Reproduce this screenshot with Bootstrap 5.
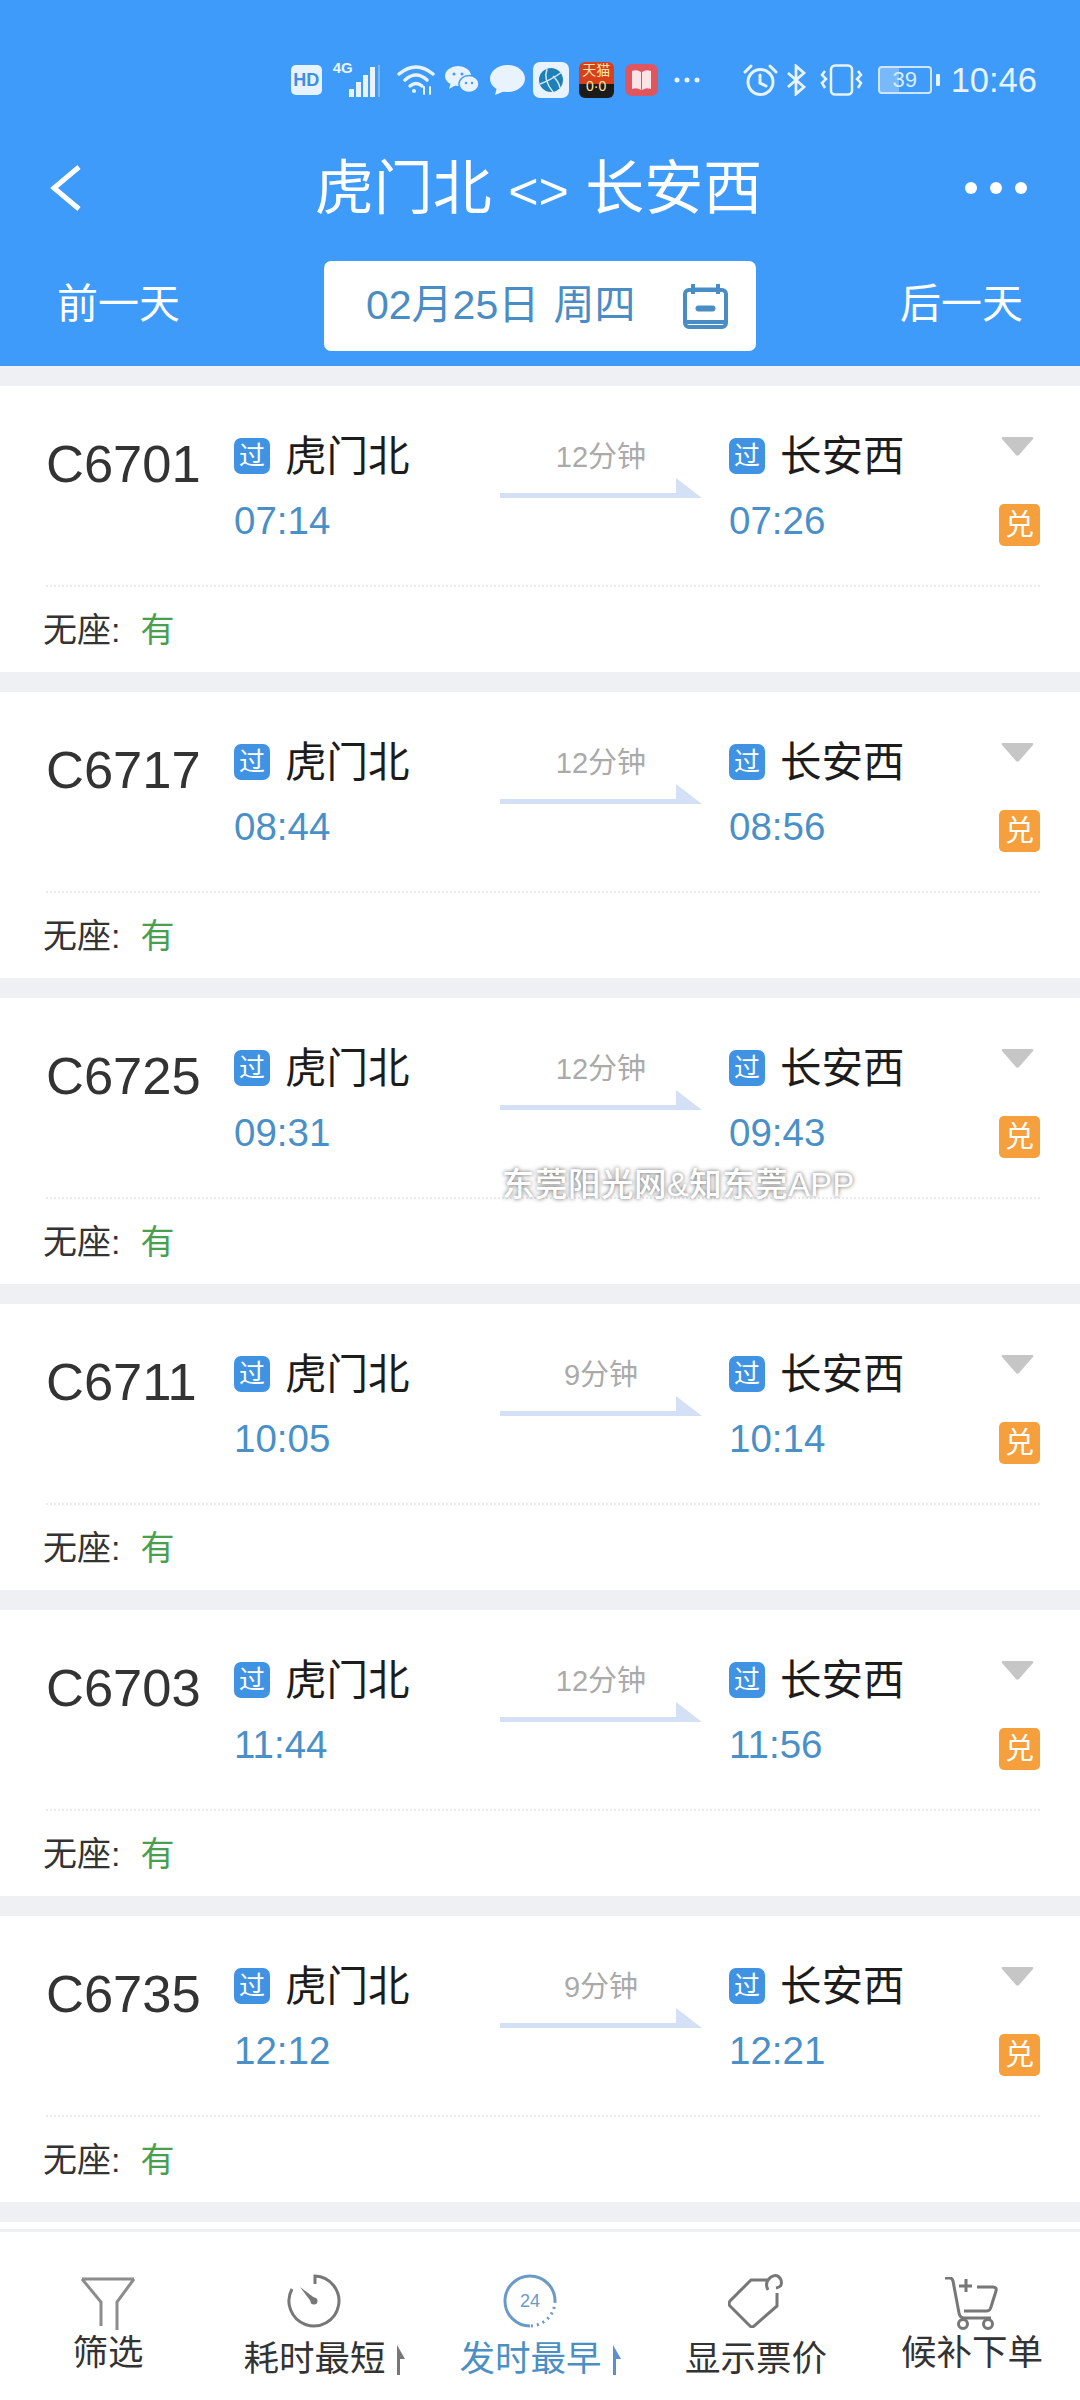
<!DOCTYPE html>
<html lang="zh">
  <head>
    <meta charset="utf-8">
    <title>虎门北 - 长安西</title>
    <link href="https://cdn.jsdelivr.net/npm/bootstrap@5.3.0/dist/css/bootstrap.min.css" rel="stylesheet">
    <style>
      html, body { height: 2400px; }
      body { width: 1080px; background: #eef0f4; font-family: "Liberation Sans", "Noto Sans CJK SC", sans-serif; color: #333; }
      .page-wrap { height: 2400px; }

      /* header */
      .top-head { background: #3e9bf9; color: #fff; height: 366px; flex: none; }
      .status-row { height: 80px; margin-top: 40px; padding-right: 43px; color: #e8f3fe; }
      .status-row svg { flex: none; }
      .hd-tag { width: 31px; height: 30px; margin-left: 0; background: #e6f2fd; color: #3e8fe0; border-radius: 5px; font-size: 18px; font-weight: 700; line-height: 30px; text-align: center; }
      .net-wrap { width: 48px; height: 34px; margin-left: 11px; }
      .net-label { left: 0; top: -2px; font-size: 15px; font-weight: 700; line-height: 14px; }
      .net-wrap svg { right: 0; bottom: 0; }
      .m-8 { margin-left: 8px; } .m-10 { margin-left: 10px; } .m-11 { margin-left: 11px; }
      .m-13 { margin-left: 13px; } .m-15 { margin-left: 15px; } .m-16 { margin-left: 16px; } .m-43 { margin-left: 43px; }
      .tmall-tile { width: 35px; height: 36px; margin-left: 10px; background: linear-gradient(#d8401c 62%, #1d1a1a 62%); border-radius: 6px; color: #ffe9a8; font-size: 14px; line-height: 16px; text-align: center; overflow: hidden; }
      .batt-box { width: 54px; height: 28px; margin-left: 15px; border: 2px solid #cfe5fc; border-radius: 4px; font-size: 22px; line-height: 24px; color: #dcecfd; background: linear-gradient(90deg, rgba(255,255,255,.3) 39%, transparent 39%); text-align: center; }
      .batt-nub { width: 4px; height: 12px; margin-left: 4px; background: #e8f3fe; border-radius: 1px; }
      .clock-txt { margin-left: 11px; font-size: 34.5px; line-height: 40px; }

      .title-row { display: grid; grid-template-columns: 1fr auto 1fr; height: 136px; margin-bottom: 5px; padding: 0 53px 0 50px; }
      .route-title { padding-top: 4px; font-size: 59px; font-weight: 400; line-height: 70px; }
      .route-sep { font-size: 52px; }
      .more-dots { gap: 13px; }
      .more-dots span { width: 12px; height: 12px; background: #fff; border-radius: 50%; }

      .date-row { display: grid; grid-template-columns: 324px 432px 324px; height: 90px; }
      .day-link { font-size: 41px; line-height: 86px; }
      .day-prev { padding-left: 57px; }
      .day-next { padding-right: 57px; text-align: right; }
      .date-box { padding: 0 28px 0 42px; background: #fff; color: #4a8cc4; border-radius: 7px; font-size: 41px; }
      .date-box span { word-spacing: 3px; }

      /* train list */
      .train-list { padding-top: 20px; }
      .train-card { height: 286px; margin-bottom: 20px; background: #fff; }
      .train-main { height: 201px; margin: 0 40px 0 46px; padding-top: 48px; border-bottom: 2px dotted #e9eaec; }
      .train-no { width: 188px; flex: none; font-size: 52.5px; line-height: 60px; color: #333; }
      .stop-col { width: 266px; flex: none; }
      .stop-col.to-col { width: 270px; }
      .stop-line { height: 44px; }
      .via-tag { width: 36px; height: 36px; margin-right: 15px; background: #3f93e2; color: #fff; border-radius: 7px; font-size: 26px; line-height: 36px; text-align: center; }
      .stop-name { padding-top: 2px; font-size: 41.5px; line-height: 44px; color: #1c1c1c; }
      .dep-time { margin-top: 21px; font-size: 38.5px; line-height: 44px; color: #4a90c8; }
      .dur-col { width: 202px; margin-right: 27px; flex: none; }
      .dur-txt { font-size: 29px; line-height: 46px; color: #aaa; margin-bottom: -2px; }
      .side-col { width: 41px; flex: none; }
      .down-tri { margin: 3px 0 48px 2px; }
      .dui-tag { width: 41px; height: 42px; background: #f5a03c; color: #fff; border-radius: 5px; font-size: 29px; line-height: 42px; text-align: center; }
      .seat-row { margin: 23px 0 0 43px; font-size: 34px; line-height: 40px; color: #333; }
      .seat-ok { margin-left: 20px; color: #4a9e4f; }
      .peek-card { height: 40px; background: #fff; }

      .water-mark { left: 502px; top: 1163px; font-size: 32.5px; font-weight: 500; line-height: 44px; color: #fff; text-shadow: 0 0 4px rgba(70, 70, 70, .85); white-space: nowrap; letter-spacing: .5px; }

      /* bottom tabs */
      .bottom-tabs { height: 171px; flex: none; background: #fff; border-top: 3px solid #eeeff1; }
      .tab-item { width: 216px; padding-top: 42px; }
      .tab-item.tab-high { padding-top: 45px; }
      .tab-label { font-size: 35.5px; line-height: 40px; color: #333; white-space: nowrap; }
      .tab-high .tab-label { margin-top: 3px; }
      .tab-low .tab-label { margin-top: 11px; }
      .tab-on .tab-label { color: #4a90c4; }
      .sort-mark { margin: 0 0 4px 11px; }
    </style>
  </head>
  <body>
    <svg width="0" height="0" class="position-absolute">
      <symbol id="trip-arrow" viewBox="0 0 202 20"><polygon points="0,15 176,15 176,0 202,20 0,20" fill="#d3e0f6"/></symbol>
      <symbol id="down-arrow" viewBox="0 0 33 19"><path d="M2 0H31Q33 0 32 2L18 18Q16.500 19.500 15 18L1 2Q0 0 2 0Z" fill="#c6c6c6"/></symbol>
      <symbol id="sort-up" viewBox="0 0 8 30"><path d="M0 0L8 14H3V30H0Z"/></symbol>
    </svg>

    <div class="page-wrap d-flex flex-column position-relative overflow-hidden">
      <header class="top-head">
        <div class="status-row d-flex align-items-center justify-content-end">
          <div class="hd-tag">HD</div>
          <div class="net-wrap position-relative">
            <span class="net-label position-absolute">4G</span>
            <svg width="32" height="32" viewBox="0 0 32 32" fill="currentColor" class="position-absolute"><rect x="0" y="24" width="5" height="8"/><rect x="7" y="17" width="5" height="15"/><rect x="14" y="10" width="5" height="22"/><rect x="21" y="2" width="5" height="30"/><rect x="29" y="0" width="2" height="32" opacity=".35"/></svg>
          </div>
          <svg class="m-16" width="38" height="32" viewBox="0 0 38 32" fill="none" stroke="currentColor" stroke-width="3.500" stroke-linecap="round"><path d="M2 10Q19 -4 36 10"/><path d="M8 16Q19 6 30 16"/><path d="M13 22Q19 17 25 22"/><circle cx="17" cy="27" r="2" fill="currentColor" stroke="none"/><path d="M27 30V23M33 30V23" stroke-width="2"/></svg>
          <svg class="m-10" width="34" height="28" viewBox="0 0 34 28" fill="currentColor"><ellipse cx="13" cy="10" rx="13" ry="10"/><path d="M6 16L4 23L11 19Z"/><ellipse cx="24" cy="18" rx="10" ry="8.500" stroke="#3e9bf9" stroke-width="1.500"/><circle cx="9" cy="8" r="1.500" fill="#3e9bf9"/><circle cx="17" cy="8" r="1.500" fill="#3e9bf9"/><circle cx="21" cy="17" r="1.200" fill="#3e9bf9"/><circle cx="27" cy="17" r="1.200" fill="#3e9bf9"/></svg>
          <svg class="m-11" width="35" height="30" viewBox="0 0 35 30" fill="currentColor"><ellipse cx="17.500" cy="13.500" rx="17.500" ry="13.500"/><path d="M7 22L5 30L15 26Z"/></svg>
          <svg class="m-8" width="36" height="36" viewBox="0 0 36 36"><rect width="36" height="36" rx="7" fill="#e8f3fe"/><circle cx="18" cy="18" r="12" fill="#1f7fb8"/><path d="M7 22Q18 18 29 10M14 7Q10 18 20 30M20 14Q26 20 27 26" fill="none" stroke="#cfe9f5" stroke-width="1.500"/></svg>
          <div class="tmall-tile">天猫<br>0·0</div>
          <svg class="m-11" width="33" height="32" viewBox="0 0 33 32"><rect width="33" height="32" rx="7" fill="#e0565f"/><path d="M7 7Q12 5 16 8V26Q12 23 7 25ZM26 7Q21 5 17 8V26Q21 23 26 25Z" fill="#fbe3e6"/></svg>
          <svg class="m-16" width="26" height="6" viewBox="0 0 26 6" fill="currentColor"><circle cx="3" cy="3" r="2.500"/><circle cx="13" cy="3" r="2.500"/><circle cx="23" cy="3" r="2.500"/></svg>
          <svg class="m-43" width="35" height="32" viewBox="0 0 35 32" fill="none" stroke="currentColor" stroke-width="3" stroke-linecap="round"><circle cx="17.500" cy="18" r="12.500"/><path d="M17 11V19L23 22M2 8L8 2M33 8L27 2"/></svg>
          <svg class="m-8" width="21" height="32" viewBox="0 0 21 32" fill="none" stroke="currentColor" stroke-width="2.800"><path d="M2 9L18 23L10 30V2L18 9L2 23"/></svg>
          <svg class="m-13" width="43" height="32" viewBox="0 0 43 32" fill="none" stroke="currentColor" stroke-width="2.500"><rect x="11" y="1.500" width="21" height="29" rx="4"/><path d="M5 7L2 11L6 15L2 19L5 24M38 7L41 11L37 15L41 19L38 24"/></svg>
          <div class="batt-box">39</div>
          <div class="batt-nub"></div>
          <div class="clock-txt">10:46</div>
        </div>

        <div class="title-row align-items-center">
          <svg width="31" height="46" viewBox="0 0 31 46" fill="none" stroke="#fff" stroke-width="5"><path d="M29 2L4 23L29 44"/></svg>
          <div class="route-title">虎门北 <span class="route-sep">&lt;&gt;</span> 长安西</div>
          <div class="more-dots d-flex justify-content-end"><span></span><span></span><span></span></div>
        </div>

        <div class="date-row">
          <div class="day-link day-prev">前一天</div>
          <div class="date-box d-flex align-items-center justify-content-between">
            <span>02月25日 周四</span>
            <svg width="45" height="45" viewBox="0 0 45 45" fill="none" stroke="#4a8cc4" stroke-width="4"><rect x="2" y="6" width="41" height="37" rx="4"/><path d="M10 0V10M35 0V10M2 38H43" /><path d="M10 5H35" stroke-width="3"/><rect x="13" y="22" width="19" height="5" rx="2" fill="#4a8cc4" stroke-width="1"/></svg>
          </div>
          <div class="day-link day-next">后一天</div>
        </div>
      </header>

      <main class="train-list flex-grow-1 overflow-hidden">
        <div class="train-card">
          <div class="train-main d-flex">
            <div class="train-no">C6701</div>
            <div class="stop-col"><div class="stop-line d-flex align-items-center"><span class="via-tag">过</span><span class="stop-name">虎门北</span></div><div class="dep-time">07:14</div></div>
            <div class="dur-col text-center"><div class="dur-txt">12分钟</div><svg class="d-block" width="202" height="20"><use href="#trip-arrow"/></svg></div>
            <div class="stop-col to-col"><div class="stop-line d-flex align-items-center"><span class="via-tag">过</span><span class="stop-name">长安西</span></div><div class="dep-time">07:26</div></div>
            <div class="side-col"><svg class="down-tri d-block" width="33" height="19"><use href="#down-arrow"/></svg><div class="dui-tag">兑</div></div>
          </div>
          <div class="seat-row">无座:<span class="seat-ok">有</span></div>
        </div>

        <div class="train-card">
          <div class="train-main d-flex">
            <div class="train-no">C6717</div>
            <div class="stop-col"><div class="stop-line d-flex align-items-center"><span class="via-tag">过</span><span class="stop-name">虎门北</span></div><div class="dep-time">08:44</div></div>
            <div class="dur-col text-center"><div class="dur-txt">12分钟</div><svg class="d-block" width="202" height="20"><use href="#trip-arrow"/></svg></div>
            <div class="stop-col to-col"><div class="stop-line d-flex align-items-center"><span class="via-tag">过</span><span class="stop-name">长安西</span></div><div class="dep-time">08:56</div></div>
            <div class="side-col"><svg class="down-tri d-block" width="33" height="19"><use href="#down-arrow"/></svg><div class="dui-tag">兑</div></div>
          </div>
          <div class="seat-row">无座:<span class="seat-ok">有</span></div>
        </div>

        <div class="train-card">
          <div class="train-main d-flex">
            <div class="train-no">C6725</div>
            <div class="stop-col"><div class="stop-line d-flex align-items-center"><span class="via-tag">过</span><span class="stop-name">虎门北</span></div><div class="dep-time">09:31</div></div>
            <div class="dur-col text-center"><div class="dur-txt">12分钟</div><svg class="d-block" width="202" height="20"><use href="#trip-arrow"/></svg></div>
            <div class="stop-col to-col"><div class="stop-line d-flex align-items-center"><span class="via-tag">过</span><span class="stop-name">长安西</span></div><div class="dep-time">09:43</div></div>
            <div class="side-col"><svg class="down-tri d-block" width="33" height="19"><use href="#down-arrow"/></svg><div class="dui-tag">兑</div></div>
          </div>
          <div class="seat-row">无座:<span class="seat-ok">有</span></div>
        </div>

        <div class="train-card">
          <div class="train-main d-flex">
            <div class="train-no">C6711</div>
            <div class="stop-col"><div class="stop-line d-flex align-items-center"><span class="via-tag">过</span><span class="stop-name">虎门北</span></div><div class="dep-time">10:05</div></div>
            <div class="dur-col text-center"><div class="dur-txt">9分钟</div><svg class="d-block" width="202" height="20"><use href="#trip-arrow"/></svg></div>
            <div class="stop-col to-col"><div class="stop-line d-flex align-items-center"><span class="via-tag">过</span><span class="stop-name">长安西</span></div><div class="dep-time">10:14</div></div>
            <div class="side-col"><svg class="down-tri d-block" width="33" height="19"><use href="#down-arrow"/></svg><div class="dui-tag">兑</div></div>
          </div>
          <div class="seat-row">无座:<span class="seat-ok">有</span></div>
        </div>

        <div class="train-card">
          <div class="train-main d-flex">
            <div class="train-no">C6703</div>
            <div class="stop-col"><div class="stop-line d-flex align-items-center"><span class="via-tag">过</span><span class="stop-name">虎门北</span></div><div class="dep-time">11:44</div></div>
            <div class="dur-col text-center"><div class="dur-txt">12分钟</div><svg class="d-block" width="202" height="20"><use href="#trip-arrow"/></svg></div>
            <div class="stop-col to-col"><div class="stop-line d-flex align-items-center"><span class="via-tag">过</span><span class="stop-name">长安西</span></div><div class="dep-time">11:56</div></div>
            <div class="side-col"><svg class="down-tri d-block" width="33" height="19"><use href="#down-arrow"/></svg><div class="dui-tag">兑</div></div>
          </div>
          <div class="seat-row">无座:<span class="seat-ok">有</span></div>
        </div>

        <div class="train-card">
          <div class="train-main d-flex">
            <div class="train-no">C6735</div>
            <div class="stop-col"><div class="stop-line d-flex align-items-center"><span class="via-tag">过</span><span class="stop-name">虎门北</span></div><div class="dep-time">12:12</div></div>
            <div class="dur-col text-center"><div class="dur-txt">9分钟</div><svg class="d-block" width="202" height="20"><use href="#trip-arrow"/></svg></div>
            <div class="stop-col to-col"><div class="stop-line d-flex align-items-center"><span class="via-tag">过</span><span class="stop-name">长安西</span></div><div class="dep-time">12:21</div></div>
            <div class="side-col"><svg class="down-tri d-block" width="33" height="19"><use href="#down-arrow"/></svg><div class="dui-tag">兑</div></div>
          </div>
          <div class="seat-row">无座:<span class="seat-ok">有</span></div>
        </div>
        <div class="peek-card"></div>
      </main>

      <div class="water-mark position-absolute">东莞阳光网&amp;知东莞APP</div>

      <nav class="bottom-tabs d-flex">
        <div class="tab-item tab-high d-flex justify-content-center">
          <div class="d-flex flex-column align-items-center">
            <svg width="54" height="53" viewBox="0 0 54 53" fill="none" stroke="#8c8c8c" stroke-width="3"><path d="M1 2H53M1 2L20 25V49M53 2L36 25V53"/></svg>
            <div class="tab-label">筛选</div>
          </div>
        </div>
        <div class="tab-item tab-low d-flex justify-content-center align-items-start">
          <div class="d-flex align-items-end">
            <div class="d-flex flex-column align-items-center">
              <svg width="54" height="54" viewBox="0 0 54 54" fill="none" stroke="#777" stroke-width="3"><path d="M28 10V2A25 25 0 1 1 5 15"/><path d="M13 13L29 25L25 29Z" fill="#777" stroke="none"/><circle cx="27" cy="27" r="3.500" fill="#777" stroke="none"/></svg>
              <div class="tab-label">耗时最短</div>
            </div>
            <svg class="sort-mark" width="8" height="30" fill="#777"><use href="#sort-up"/></svg>
          </div>
        </div>
        <div class="tab-item tab-low tab-on d-flex justify-content-center align-items-start">
          <div class="d-flex align-items-end">
            <div class="d-flex flex-column align-items-center">
              <svg width="54" height="54" viewBox="0 0 54 54" fill="none" stroke="#6a9ac8" stroke-width="3"><path d="M27 52A25 25 0 1 1 52 27"/><path d="M52 27A25 25 0 0 1 27 52" stroke-dasharray="2 4"/><text x="27" y="33" text-anchor="middle" font-size="18" fill="#6a9ac8" stroke="none">24</text></svg>
              <div class="tab-label">发时最早</div>
            </div>
            <svg class="sort-mark" width="8" height="30" fill="#5a8fd0"><use href="#sort-up"/></svg>
          </div>
        </div>
        <div class="tab-item tab-low d-flex justify-content-center">
          <div class="d-flex flex-column align-items-center">
            <svg width="56" height="54" viewBox="0 0 56 54" fill="none" stroke="#777" stroke-width="3"><path d="M39 6H23L2 27Q0 30 2 32L22 52Q24 54 26 52L49 32V19"/><path d="M40 16Q36 8 43 3Q50 -1 53 6Q55 13 48 14"/></svg>
            <div class="tab-label">显示票价</div>
          </div>
        </div>
        <div class="tab-item tab-high d-flex justify-content-center">
          <div class="d-flex flex-column align-items-center">
            <svg width="54" height="53" viewBox="0 0 54 53" fill="none" stroke="#777" stroke-width="3"><path d="M0 1H5Q7 1 8 4L14 36Q15 41 19 41H46"/><path d="M32 10H48Q52 10 51 14L46 30Q45 34 42 34H19"/><path d="M21 2V15M14 9H27"/><circle cx="18" cy="47" r="4.500"/><circle cx="43" cy="47" r="4.500"/></svg>
            <div class="tab-label">候补下单</div>
          </div>
        </div>
      </nav>
    </div>

    <script src="https://cdn.jsdelivr.net/npm/bootstrap@5.3.0/dist/js/bootstrap.bundle.min.js"></script>
  </body>
</html>
